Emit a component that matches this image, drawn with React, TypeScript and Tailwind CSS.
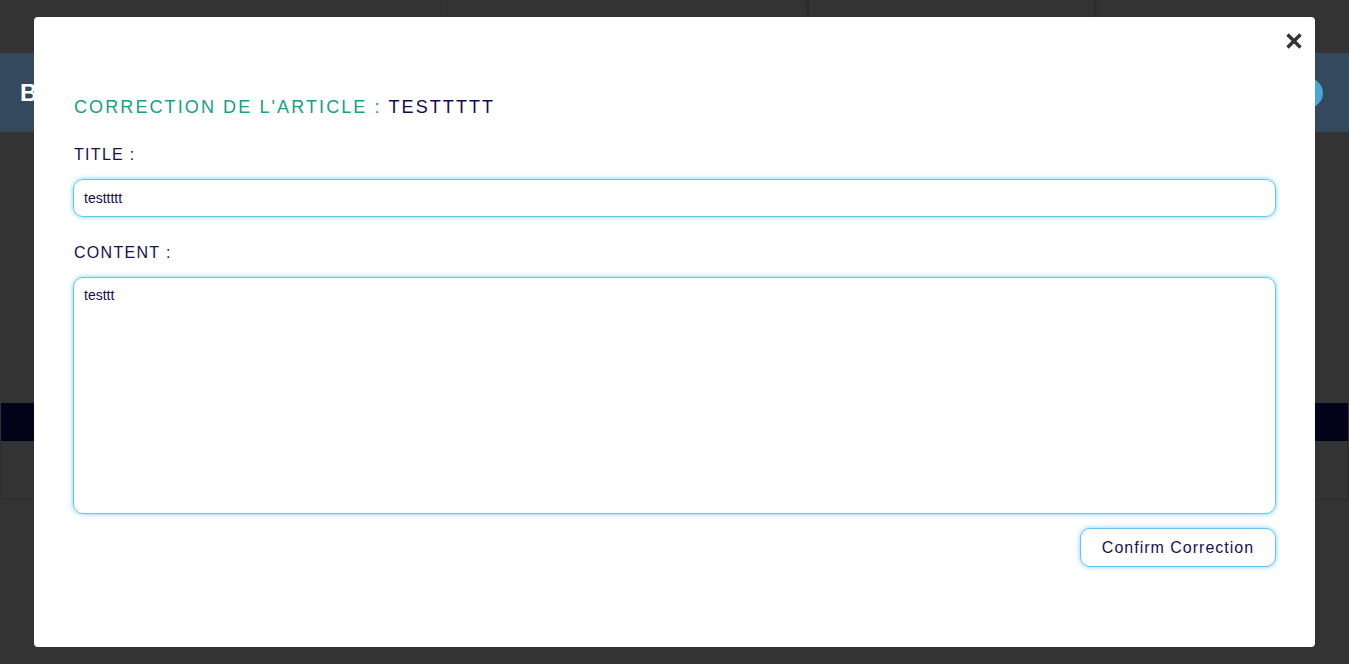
import React from "react";

export default function App() {
  const font = { fontFamily: '"Liberation Sans", Arial, sans-serif' };
  return (
    <div className="relative w-[1349px] h-[664px] overflow-hidden bg-[#333333]" style={font}>
      {/* underlying page (dimmed) */}
      <div className="flex flex-col h-full">
        <div className="h-[53px] flex">
          <div className="w-[448px] border-r border-[#2e2e2e]" />
          <div className="w-[360px]" />
          <div className="w-[287px] border-x border-[#2b2b2b] rounded-b-md shadow-[0_0_4px_rgba(0,0,0,0.3)]" />
          <div className="flex-1" />
        </div>
        <div className="h-[79px] bg-[#34495e] flex items-center justify-between pl-5 pr-[26px]">
          <span className="text-white font-bold text-[24px] tracking-[2px]">B</span>
          <div className="w-[30px] h-[30px] rounded-full bg-[#4aa5d6]" />
        </div>
        <div className="h-[271px]" />
        <div className="h-[38px] mx-px bg-[#020219]" />
        <div className="h-[59px] mx-px border border-t-0 border-[#2a2a2a]" />
        <div className="flex-1" />
      </div>

      {/* modal */}
      <div className="absolute left-[34px] top-[17px] w-[1281px] h-[630px] bg-white rounded-[4px] px-[39px]">
        <button className="absolute right-[12px] top-[15px] w-[18px] h-[18px] flex items-center justify-center">
          <svg width="18" height="18" viewBox="0 0 18 18">
            <path d="M2.5 2.5 L15.5 15.5 M15.5 2.5 L2.5 15.5" stroke="#333333" strokeWidth="3.4" strokeLinecap="butt" />
          </svg>
        </button>
        <div className="pt-[80px]">
          <h2 className="text-[18px] leading-[21px] tracking-[2.1px] pl-px text-[#16a085] font-normal">
            CORRECTION DE L'ARTICLE : <span className="text-[#120a4f]">TESTTTTT</span>
          </h2>
          <div className="mt-[28px] text-[16px] leading-[18px] tracking-[1.3px] pl-px text-[#1a1052]">TITLE :</div>
          <div className="mt-[15px] h-[38px] rounded-[10px] border-[1.5px] border-[#62c6f4] shadow-[0_0_5px_rgba(98,198,244,0.85)] flex items-center px-[10px] text-[14px] text-[#160c4f]">
            testtttt
          </div>
          <div className="mt-[27px] text-[16px] leading-[18px] tracking-[1.3px] pl-px text-[#1a1052]">CONTENT :</div>
          <div className="mt-[15px] h-[237px] rounded-[10px] border-[1.5px] border-[#62c6f4] shadow-[0_0_5px_rgba(98,198,244,0.85)] px-[10px] pt-[9px] text-[14px] leading-[16px] text-[#160c4f]">
            testtt
          </div>
          <div className="mt-[14px] flex justify-end">
            <button className="w-[196px] h-[39px] rounded-[10px] border-[1.5px] border-[#62c6f4] shadow-[0_0_5px_rgba(98,198,244,0.85)] text-[16px] tracking-[1px] text-[#1a1052] bg-white">
              Confirm Correction
            </button>
          </div>
        </div>
      </div>
    </div>
  );
}
